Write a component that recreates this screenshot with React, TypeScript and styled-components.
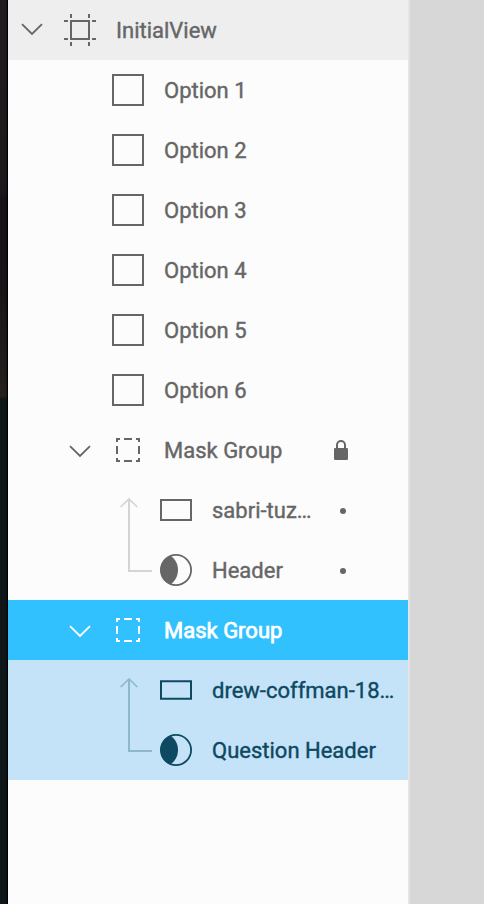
import React from 'react';
import styled, { createGlobalStyle } from 'styled-components';

const GlobalStyle = createGlobalStyle`
  * { box-sizing: border-box; }
  body { margin: 0; background: #d7d7d7; overflow: hidden; }
`;

const Screen = styled.div`
  display: flex;
  width: 484px;
  height: 904px;
  background: #d7d7d7;
  font-family: Roboto, sans-serif;
`;

const Backdrop = styled.div`
  width: 8px;
  flex: none;
  border-right: 1px solid #000;
  background:
    linear-gradient(90deg, transparent 5px, rgba(0, 0, 0, 0.35)),
    linear-gradient(#211c20 0, #1d181c 190px, #171219 200px, #181317 290px, #26201e 396px, #0f161a 399px, #0f161a 100%);
`;

const Panel = styled.div`
  width: 402px;
  flex: none;
  background: #fcfcfc;
  border-right: 2px solid #e4e4e4;
`;

type Tone = 'plain' | 'artboard' | 'selected' | 'child';

const tones: Record<Tone, { bg: string; fg: string; line: string }> = {
  plain: { bg: '#fcfcfc', fg: '#666666', line: '#d4d4d4' },
  artboard: { bg: '#eeeeee', fg: '#666666', line: '#d4d4d4' },
  selected: { bg: '#31c1ff', fg: '#ffffff', line: '#ffffff' },
  child: { bg: '#c5e3f8', fg: '#0e4861', line: '#8fb7cd' },
};

const Row = styled.div<{ $tone: Tone; $indent: number }>`
  display: flex;
  align-items: center;
  height: 60px;
  padding-left: ${(p) => p.$indent}px;
  background: ${(p) => tones[p.$tone].bg};
  color: ${(p) => tones[p.$tone].fg};
`;

const Group = styled.div<{ $tone: Tone }>`
  display: flex;
  height: 120px;
  padding-left: 104px;
  background: ${(p) => tones[p.$tone].bg};
  color: ${(p) => tones[p.$tone].line};
`;

const Children = styled.div`
  flex: 1;
  min-width: 0;
`;

const Label = styled.span<{ $gap?: number; $strong?: boolean }>`
  margin-left: ${(p) => p.$gap ?? 20}px;
  padding-top: 2px;
  font-size: 22px;
  line-height: 28px;
  white-space: nowrap;
  -webkit-text-stroke: ${(p) => (p.$strong ? 0.75 : 0.4)}px currentColor;
`;

const IconSlot = styled.span<{ $gap: number }>`
  display: flex;
  margin-left: ${(p) => p.$gap}px;
`;

const Status = styled.span`
  display: flex;
  margin-left: auto;
  margin-right: 60px;
`;

const Icon = styled.svg`
  display: block;
  flex: none;
  fill: none;
  stroke: currentColor;
  stroke-width: 2;
`;

const Chevron = ({ low }: { low?: boolean }) => (
  <Icon width="24" height="60" viewBox="0 0 24 60">
    <path d={low ? 'M2 26.2 12 36 22 26.2' : 'M2 24.2 12 34 22 24.2'} strokeWidth="1.8" />
  </Icon>
);

const Artboard = () => (
  <Icon width="32" height="32" viewBox="0 0 32 32">
    <path d="M7 7H25V25H7ZM7 0V4M25 0V4M7 28V32M25 28V32M0 7H4M28 7H32M0 25H4M28 25H32" />
  </Icon>
);

const Square = () => (
  <Icon width="32" height="32" viewBox="0 0 32 32">
    <path d="M1 1H31V31H1Z" />
  </Icon>
);

const MaskGroup = () => (
  <Icon width="24" height="24" viewBox="0 0 24 24">
    <path d="M1 4V1H4M8 1H16M20 1H23V4M23 8V16M23 20V23H20M16 23H8M4 23H1V20M1 16V8" />
  </Icon>
);

const Rectangle = ({ short }: { short?: boolean }) => (
  <Icon width="32" height="24" viewBox="0 0 32 24">
    <path d={short ? 'M1 3.3H31V20.7H1Z' : 'M1 2H31V22H1Z'} />
  </Icon>
);

const Mask = () => (
  <Icon width="32" height="32" viewBox="0 0 32 32">
    <circle cx="16" cy="16" r="15.1" strokeWidth="1.8" />
    <path d="M10.5 1.8C20.5 8 20.5 24 10.5 30.2C-2.8 25 -2.8 7 10.5 1.8Z" fill="currentColor" stroke="none" />
  </Icon>
);

const ClipArrow = () => (
  <Icon width="48" height="120" viewBox="0 0 48 120">
    <path d="M40 91H17V19" />
    <path d="M8.7 27 17 19 25.3 27" strokeWidth="1.7" />
  </Icon>
);

const Lock = () => (
  <Icon width="14" height="20" viewBox="0 0 14 20">
    <rect y="8" width="14" height="12" rx="1.3" fill="currentColor" stroke="none" />
    <path d="M3 9V5a4 4 0 0 1 8 0V9" />
  </Icon>
);

const Dot = () => (
  <Icon width="12" height="8" viewBox="0 0 12 8">
    <circle cx="7" cy="5" r="3" fill="currentColor" stroke="none" />
  </Icon>
);

const options = [1, 2, 3, 4, 5, 6];

const GroupRow = ({ selected }: { selected?: boolean }) => (
  <Row $tone={selected ? 'selected' : 'plain'} $indent={60}>
    <Chevron low />
    <IconSlot $gap={24}><MaskGroup /></IconSlot>
    <Label $gap={24} $strong={selected}>Mask Group</Label>
    {!selected && <Status><Lock /></Status>}
  </Row>
);

export default function App() {
  return (
    <>
      <GlobalStyle />
      <Screen>
        <Backdrop />
        <Panel>
          <Row $tone="artboard" $indent={12}>
            <Chevron />
            <IconSlot $gap={20}><Artboard /></IconSlot>
            <Label>InitialView</Label>
          </Row>
          {options.map((n) => (
            <Row key={n} $tone="plain" $indent={104}>
              <Square />
              <Label>Option {n}</Label>
            </Row>
          ))}
          <GroupRow />
          <Group $tone="plain">
            <ClipArrow />
            <Children>
              <Row $tone="plain" $indent={0}>
                <Rectangle />
                <Label>sabri-tuz…</Label>
                <Status><Dot /></Status>
              </Row>
              <Row $tone="plain" $indent={0}>
                <Mask />
                <Label>Header</Label>
                <Status><Dot /></Status>
              </Row>
            </Children>
          </Group>
          <GroupRow selected />
          <Group $tone="child">
            <ClipArrow />
            <Children>
              <Row $tone="child" $indent={0}>
                <Rectangle short />
                <Label>drew-coffman-18…</Label>
              </Row>
              <Row $tone="child" $indent={0}>
                <Mask />
                <Label>Question Header</Label>
              </Row>
            </Children>
          </Group>
        </Panel>
      </Screen>
    </>
  );
}
